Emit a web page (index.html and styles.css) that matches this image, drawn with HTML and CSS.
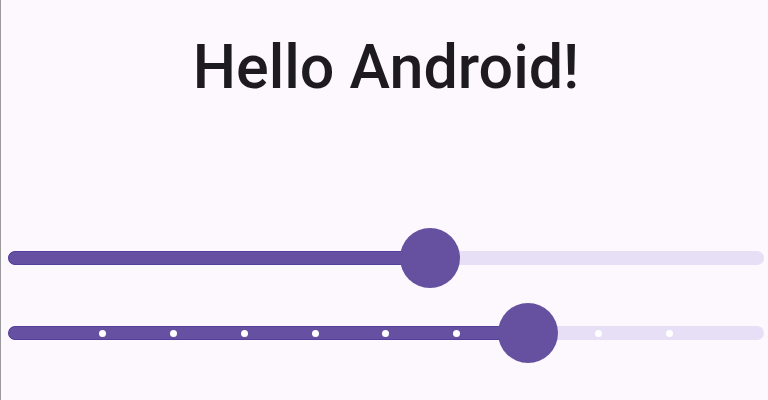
FILE: index.html
```html
<!DOCTYPE html>
<html>
<head>
<meta charset="utf-8">
<link rel="stylesheet" href="styles.css">
</head>
<body>
<main class="screen">
  <h1 class="title">Hello Android!</h1>
  <section class="sliders">
    <div class="slider">
      <div class="track">
        <div class="active" style="width: 422px"></div>
      </div>
      <div class="thumb" style="left: 422px"></div>
    </div>
    <div class="slider">
      <div class="track">
        <div class="active" style="width: 520px"></div>
        <div class="ticks">
          <span class="tick hidden"></span>
          <span class="tick"></span>
          <span class="tick"></span>
          <span class="tick"></span>
          <span class="tick"></span>
          <span class="tick"></span>
          <span class="tick"></span>
          <span class="tick"></span>
          <span class="tick"></span>
          <span class="tick"></span>
          <span class="tick hidden"></span>
        </div>
      </div>
      <div class="thumb" style="left: 520px"></div>
    </div>
  </section>
</main>
</body>
</html>
```
FILE: styles.css
```css
html, body {
  margin: 0;
  padding: 0;
}
body {
  width: 768px;
  height: 400px;
  overflow: hidden;
  background: #fdf7fe;
  font-family: Roboto, "Noto Sans", sans-serif;
}
.screen {
  box-sizing: border-box;
  height: 400px;
  border-left: 1px solid #9a9a9a;
  padding-top: 36px;
  display: flex;
  flex-direction: column;
}
.title {
  margin: 0;
  font-size: 61px;
  line-height: 62px;
  font-weight: 500;
  color: #1d1b20;
  text-align: center;
  padding-left: 3px;
}
.sliders {
  margin-top: 130px;
  display: flex;
  flex-direction: column;
  gap: 15px;
  padding-left: 7px;
  padding-right: 4px;
}
.slider {
  position: relative;
  height: 60px;
  display: flex;
  align-items: center;
}
.track {
  position: relative;
  flex: 1;
  height: 14px;
  border-radius: 7px;
  background: #e6dff6;
  overflow: hidden;
}
.active {
  height: 100%;
  background: #6550a2;
  border-radius: 7px 0 0 7px;
  box-shadow: inset 0 0 0 1px #54409a;
}
.ticks {
  position: absolute;
  left: 20px;
  right: 20px;
  top: 4px;
  display: flex;
  justify-content: space-between;
}
.tick {
  width: 7px;
  height: 7px;
  border-radius: 50%;
  background: #ffffff;
}
.tick.hidden {
  visibility: hidden;
}
.thumb {
  position: absolute;
  top: 0;
  width: 60px;
  height: 60px;
  margin-left: -30px;
  border-radius: 50%;
  background: #6551a0;
}
```
